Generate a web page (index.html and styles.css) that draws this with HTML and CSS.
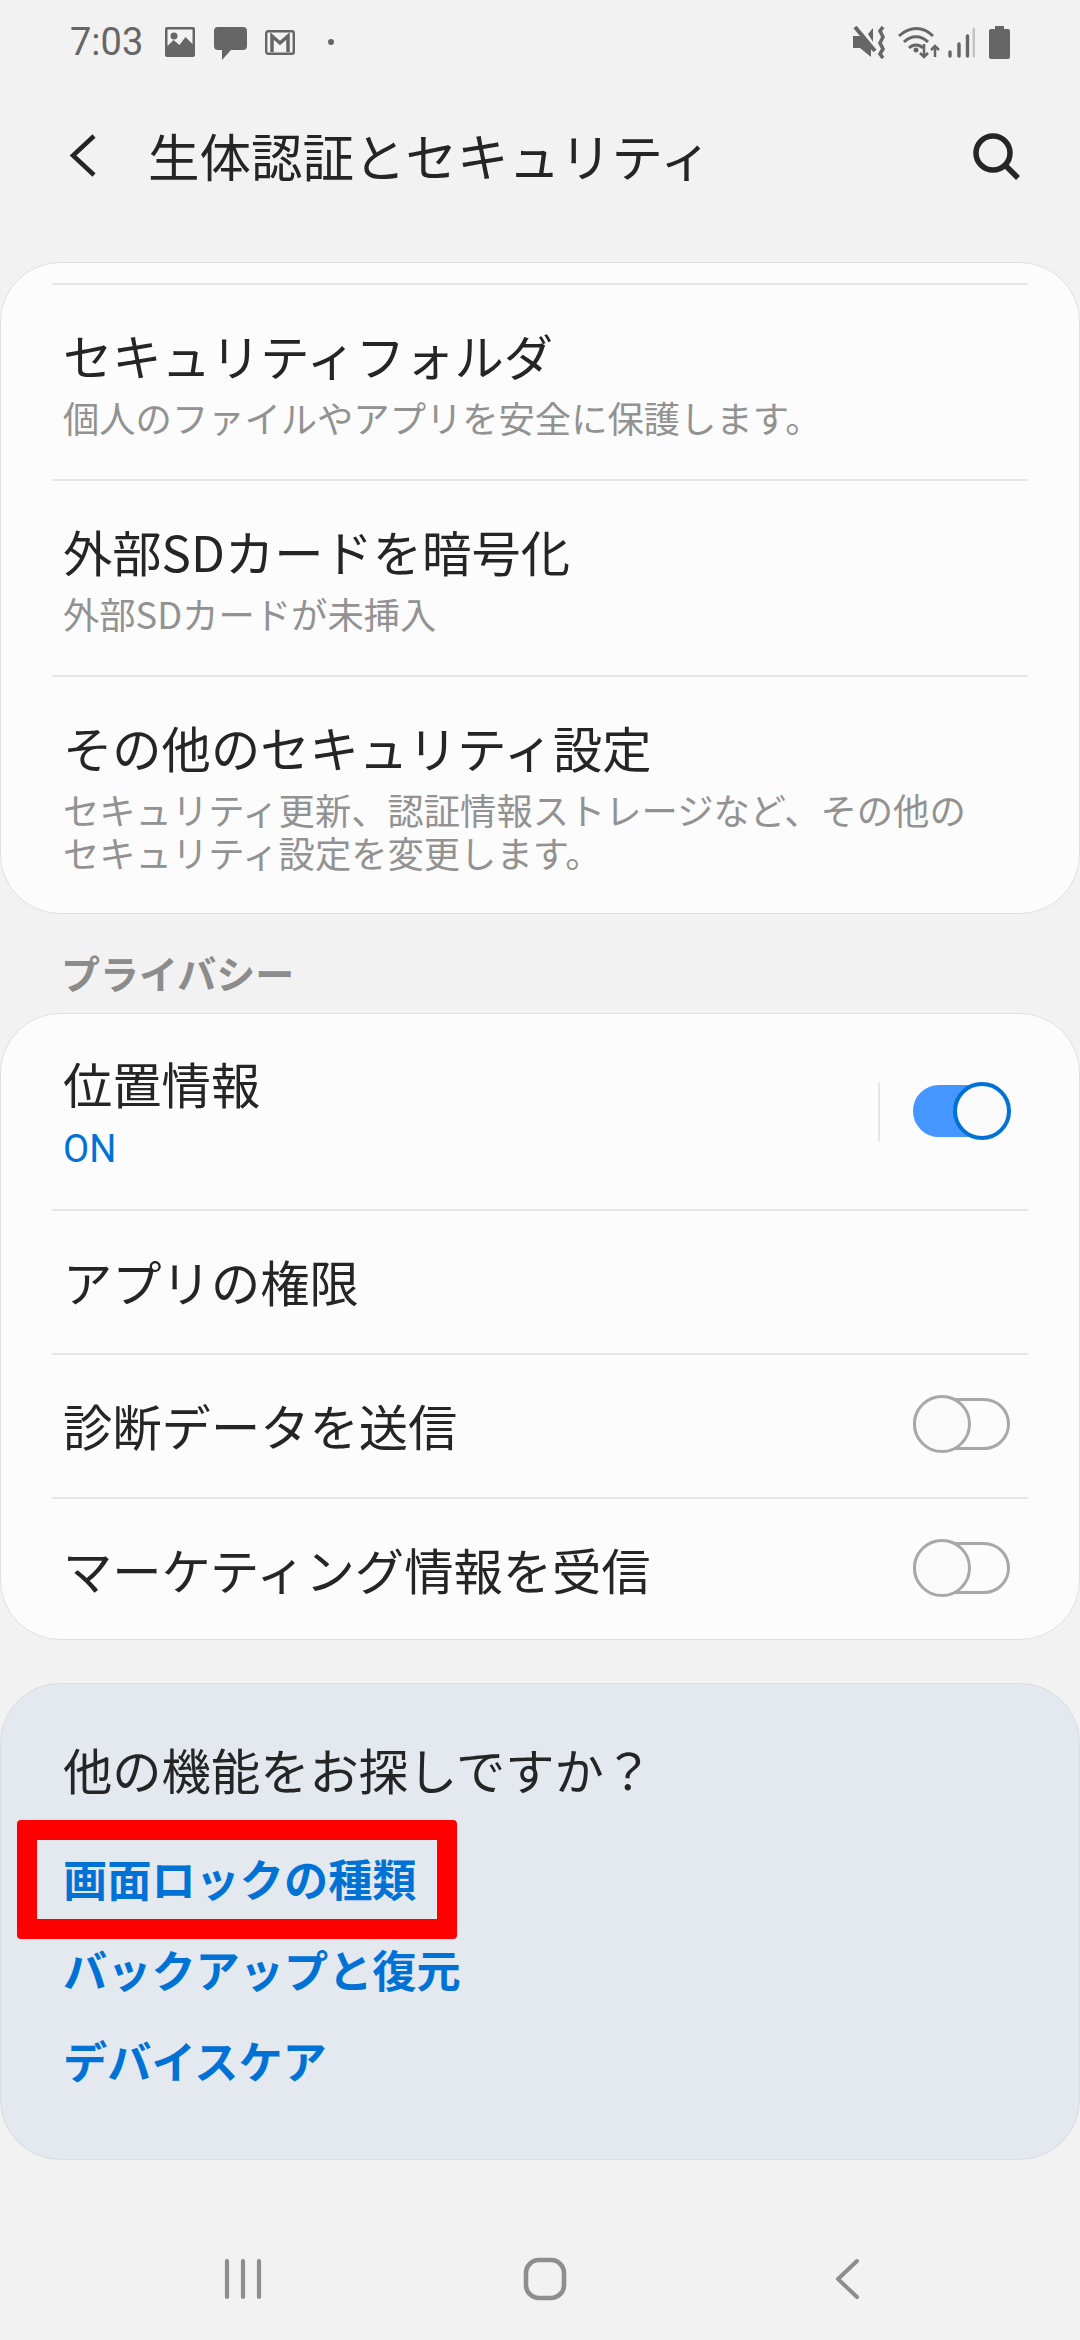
FILE: index.html
```html
<!DOCTYPE html>
<html lang="ja">
<head>
<meta charset="utf-8">
<title>生体認証とセキュリティ</title>
<link rel="stylesheet" href="styles.css">
</head>
<body>
<div class="page">
  <div class="status">
    <span class="time">7:03</span>
    <svg class="st-img" width="30" height="30" viewBox="0 0 30 30"><path fill="#666" fill-rule="evenodd" d="M2 0h26a2 2 0 0 1 2 2v26a2 2 0 0 1-2 2H2a2 2 0 0 1-2-2V2a2 2 0 0 1 2-2zM2.500 2.500V19l6-6 6 5 6-8 7 7V2.500z"/><circle cx="9" cy="9" r="3.500" fill="#666"/></svg>
    <svg class="st-chat" width="33" height="33" viewBox="0 0 33 33"><path fill="#666" d="M4 0h25a4 4 0 0 1 4 4v15a4 4 0 0 1-4 4H17l-9 10v-10H4a4 4 0 0 1-4-4V4a4 4 0 0 1 4-4z"/></svg>
    <svg class="st-mail" width="30" height="25" viewBox="0 0 30 25"><rect x="1.200" y="1.200" width="27.600" height="22.600" rx="2" fill="none" stroke="#666" stroke-width="2.400"/><path fill="none" stroke="#666" stroke-width="3.500" d="M7 22V6l8 7 8-7v16"/></svg>
    <svg class="st-dot" width="6" height="6" viewBox="0 0 6 6"><circle cx="3" cy="3" r="3" fill="#666"/></svg>
    <div class="status-right">
      <svg class="sr-mute" width="33" height="33" viewBox="0 0 33 33"><path fill="#666" d="M0 11h7l11 9v12l-11-9H0z" transform="translate(0 -1)"/><path fill="#666" d="M15 8l5-6v14z"/><path stroke="#666" stroke-width="4" d="M2 1l20 24"/><path fill="none" stroke="#666" stroke-width="3.600" d="M30 1l-3 4 3 6-3 6 3 6-3 5 3 4"/></svg>
      <svg class="sr-wifi" width="42" height="33" viewBox="0 0 42 33"><g fill="none" stroke="#666" stroke-width="3"><path d="M1 10c11-10 24-10 34 0"/><path d="M6 16c7-7 17-7 24 0"/><path d="M11 22c4-4 10-4 14 0"/></g><circle cx="18" cy="24" r="2.500" fill="#666"/><path stroke="#666" stroke-width="2.500" fill="none" d="M26 18v13M22 27l4 4 4-4M37 31V20M33 24l4-4 4 4"/></svg>
      <svg class="sr-signal" width="27" height="31" viewBox="0 0 27 31"><g stroke-linecap="round" stroke-width="3.400"><path stroke="#666" d="M2 29v-4M11 29V17M19.500 29V9"/><path stroke="#c4c4c4" d="M26 29V2" stroke-width="3"/></g></svg>
      <svg width="21" height="33" viewBox="0 0 21 33"><path fill="#666" d="M6 0h9v3h4a2 2 0 0 1 2 2v26a2 2 0 0 1-2 2H2a2 2 0 0 1-2-2V5a2 2 0 0 1 2-2h4z"/></svg>
    </div>
  </div>

  <header class="appbar">
    <svg class="ab-back" width="28" height="44" viewBox="0 0 28 44"><path fill="none" stroke="#252525" stroke-width="4.500" d="M25 2L4 21.500 25 41"/></svg>
    <h1 class="ab-title">生体認証とセキュリティ</h1>
    <svg class="ab-search" width="48" height="48" viewBox="0 0 48 48"><circle cx="21" cy="21" r="17" fill="none" stroke="#252525" stroke-width="5.500"/><path stroke="#252525" stroke-width="5.500" d="M33 33l13 13"/></svg>
  </header>

  <section class="card card-first">
    <div class="row"><div class="t">セキュリティフォルダ</div><div class="s">個人のファイルやアプリを安全に保護します。</div></div>
    <div class="row"><div class="t">外部SDカードを暗号化</div><div class="s">外部SDカードが未挿入</div></div>
    <div class="row row-last"><div class="t">その他のセキュリティ設定</div><div class="s">セキュリティ更新、認証情報ストレージなど、その他の<br>セキュリティ設定を変更します。</div></div>
  </section>

  <div class="section-label">プライバシー</div>

  <section class="card">
    <div class="row row-first row-switch">
      <div class="row-text"><div class="t">位置情報</div><div class="on">ON</div></div>
      <span class="vline"></span>
      <span class="toggle is-on"><span class="thumb"></span></span>
    </div>
    <div class="row row-single"><div class="t">アプリの権限</div></div>
    <div class="row row-single row-switch"><div class="row-text"><div class="t">診断データを送信</div></div><span class="toggle"><span class="thumb"></span></span></div>
    <div class="row row-single row-end row-switch"><div class="row-text"><div class="t">マーケティング情報を受信</div></div><span class="toggle"><span class="thumb"></span></span></div>
  </section>

  <section class="card card-more">
    <div class="more-title">他の機能をお探しですか？</div>
    <a class="more-link">画面ロックの種類</a>
    <a class="more-link">バックアップと復元</a>
    <a class="more-link">デバイスケア</a>
    <span class="highlight"></span>
  </section>

  <nav class="navbar">
    <svg class="nav-recent" width="40" height="42" viewBox="0 0 40 42"><g stroke="#8e8e8e" stroke-width="4.200" stroke-linecap="round"><path d="M4 3v36M20 3v36M36 3v36"/></g></svg>
    <svg class="nav-home" width="44" height="44" viewBox="0 0 44 44"><rect x="3" y="3" width="38" height="38" rx="13" fill="none" stroke="#8e8e8e" stroke-width="4.600"/></svg>
    <svg class="nav-back" width="26" height="42" viewBox="0 0 26 42"><path fill="none" stroke="#8e8e8e" stroke-width="4" stroke-linecap="round" stroke-linejoin="round" d="M23 3L4 21l19 18"/></svg>
  </nav>
</div>
</body>
</html>
```
FILE: styles.css
```css
* { box-sizing: border-box; }
html, body { margin: 0; padding: 0; }
body {
  width: 1080px;
  height: 2340px;
  overflow: hidden;
  background: #f2f2f2;
  font-family: "Noto Sans CJK JP", "Roboto", sans-serif;
  color: #252525;
}
.page { display: flex; flex-direction: column; width: 1080px; height: 2340px; }

.status { display: flex; align-items: center; height: 84px; padding: 0 70px; }
.time { font-family: Roboto, sans-serif; font-size: 38px; color: #666; width: 76px; margin-right: 19px; }
.st-img { margin-right: 19px; }
.st-chat { margin-right: 18px; margin-top: 2px; }
.st-mail { margin-right: 33px; }
.status-right { display: flex; align-items: center; margin-left: auto; }
.sr-mute { margin-right: 12px; }
.sr-wifi { margin-right: 8px; }
.sr-signal { margin-right: 14px; }

.appbar { display: flex; align-items: center; height: 142px; padding: 0 60px 0 69px; }
.ab-back { margin-right: 51px; margin-top: 2px; }
.ab-search { margin-top: 2px; }
.ab-title { margin: 0; font-size: 51.500px; font-weight: 400; line-height: 60px; flex: 1; }

.card { background: #fcfcfc; border: 1px solid #e0e0e0; border-radius: 60px; }
.card-first { margin-top: 36px; padding-top: 20px; }

.row { margin: 0 51px; padding: 40px 0 40px 11px; border-top: 2px solid #e6e6e6; }
.row-last { padding-bottom: 39px; }
.row-first { border-top: 0; padding-top: 39px; padding-bottom: 38px; }
.row-single { padding-top: 40px; padding-bottom: 42px; }
.row-end { padding-bottom: 40px; }
.row-switch { display: flex; align-items: center; }
.row-text { flex: 1; }
.t { font-size: 49.300px; line-height: 60px; }
.s { margin-top: 11px; font-size: 36.300px; line-height: 43px; color: #929292; }
.on { margin-top: 15px; font-family: Roboto, sans-serif; font-size: 38px; line-height: 43px; color: #0072d6; }

.section-label { height: 99px; padding: 33px 0 0 61px; font-size: 39px; font-weight: 700; line-height: 50px; color: #8c8c8c; }

.vline { width: 2px; height: 58px; background: #e6e6e6; margin-right: 33px; }
.toggle { position: relative; display: block; width: 97px; height: 52px; margin: -2px 18px 0 0; border: 3.500px solid #a8a8a8; border-radius: 26px; }
.thumb { position: absolute; left: -3.500px; top: -6.500px; width: 58px; height: 58px; border-radius: 50%; background: #fafafa; border: 3.500px solid #a8a8a8; }
.toggle.is-on { background: #4596ff; border-color: #4596ff; }
.is-on .thumb { left: auto; right: -3.500px; border: 4px solid #0072d6; }

.card-more { position: relative; margin-top: 43px; height: 477px; padding: 55px 62px 0; background: #e3e9ef; border-color: #d8dde2; display: flex; flex-direction: column; }
.more-title { font-size: 49.300px; line-height: 60px; margin-bottom: 49px; }
.more-link { display: block; font-size: 44.200px; font-weight: 700; line-height: 60px; margin-bottom: 31px; color: #0072d6; }
.highlight { position: absolute; left: 16px; top: 136px; width: 440px; height: 119px; border: 20px solid #ff0000; border-radius: 4px; }

.navbar { display: flex; align-items: center; margin-top: 97px; height: 44px; padding-left: 223px; }
.nav-home { margin-left: 260px; }
.nav-back { margin-left: 267px; }
```
